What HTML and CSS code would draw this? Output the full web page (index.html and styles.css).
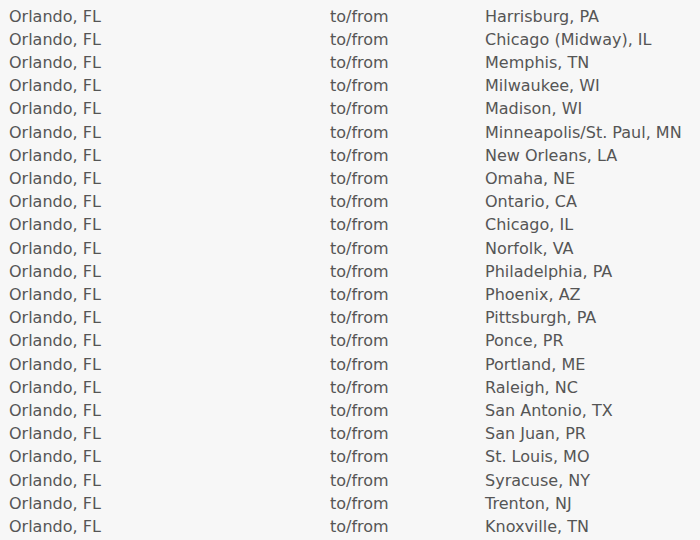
FILE: index.html
```html
<!DOCTYPE html>
<html lang="en">
<head>
<meta charset="utf-8">
<title>Routes</title>
<link rel="stylesheet" href="styles.css">
</head>
<body>
<div class="routes">
  <div class="row"><span>Orlando, FL</span><span>to/from</span><span>Harrisburg, PA</span></div>
  <div class="row"><span>Orlando, FL</span><span>to/from</span><span>Chicago (Midway), IL</span></div>
  <div class="row"><span>Orlando, FL</span><span>to/from</span><span>Memphis, TN</span></div>
  <div class="row"><span>Orlando, FL</span><span>to/from</span><span>Milwaukee, WI</span></div>
  <div class="row"><span>Orlando, FL</span><span>to/from</span><span>Madison, WI</span></div>
  <div class="row"><span>Orlando, FL</span><span>to/from</span><span>Minneapolis/St. Paul, MN</span></div>
  <div class="row"><span>Orlando, FL</span><span>to/from</span><span>New Orleans, LA</span></div>
  <div class="row"><span>Orlando, FL</span><span>to/from</span><span>Omaha, NE</span></div>
  <div class="row"><span>Orlando, FL</span><span>to/from</span><span>Ontario, CA</span></div>
  <div class="row"><span>Orlando, FL</span><span>to/from</span><span>Chicago, IL</span></div>
  <div class="row"><span>Orlando, FL</span><span>to/from</span><span>Norfolk, VA</span></div>
  <div class="row"><span>Orlando, FL</span><span>to/from</span><span>Philadelphia, PA</span></div>
  <div class="row"><span>Orlando, FL</span><span>to/from</span><span>Phoenix, AZ</span></div>
  <div class="row"><span>Orlando, FL</span><span>to/from</span><span>Pittsburgh, PA</span></div>
  <div class="row"><span>Orlando, FL</span><span>to/from</span><span>Ponce, PR</span></div>
  <div class="row"><span>Orlando, FL</span><span>to/from</span><span>Portland, ME</span></div>
  <div class="row"><span>Orlando, FL</span><span>to/from</span><span>Raleigh, NC</span></div>
  <div class="row"><span>Orlando, FL</span><span>to/from</span><span>San Antonio, TX</span></div>
  <div class="row"><span>Orlando, FL</span><span>to/from</span><span>San Juan, PR</span></div>
  <div class="row"><span>Orlando, FL</span><span>to/from</span><span>St. Louis, MO</span></div>
  <div class="row"><span>Orlando, FL</span><span>to/from</span><span>Syracuse, NY</span></div>
  <div class="row"><span>Orlando, FL</span><span>to/from</span><span>Trenton, NJ</span></div>
  <div class="row"><span>Orlando, FL</span><span>to/from</span><span>Knoxville, TN</span></div>
</div>
</body>
</html>
```
FILE: styles.css
```css
html, body {
  margin: 0;
  padding: 0;
  background: #f7f7f7;
}
body {
  font-family: "DejaVu Sans", sans-serif;
  font-size: 16px;
  color: #555555;
  overflow: hidden;
}
.routes {
  padding: 4.5px 0 0 9px;
}
.row {
  display: grid;
  grid-template-columns: 321px 155px 1fr;
  line-height: 23.2px;
  white-space: nowrap;
}
```
